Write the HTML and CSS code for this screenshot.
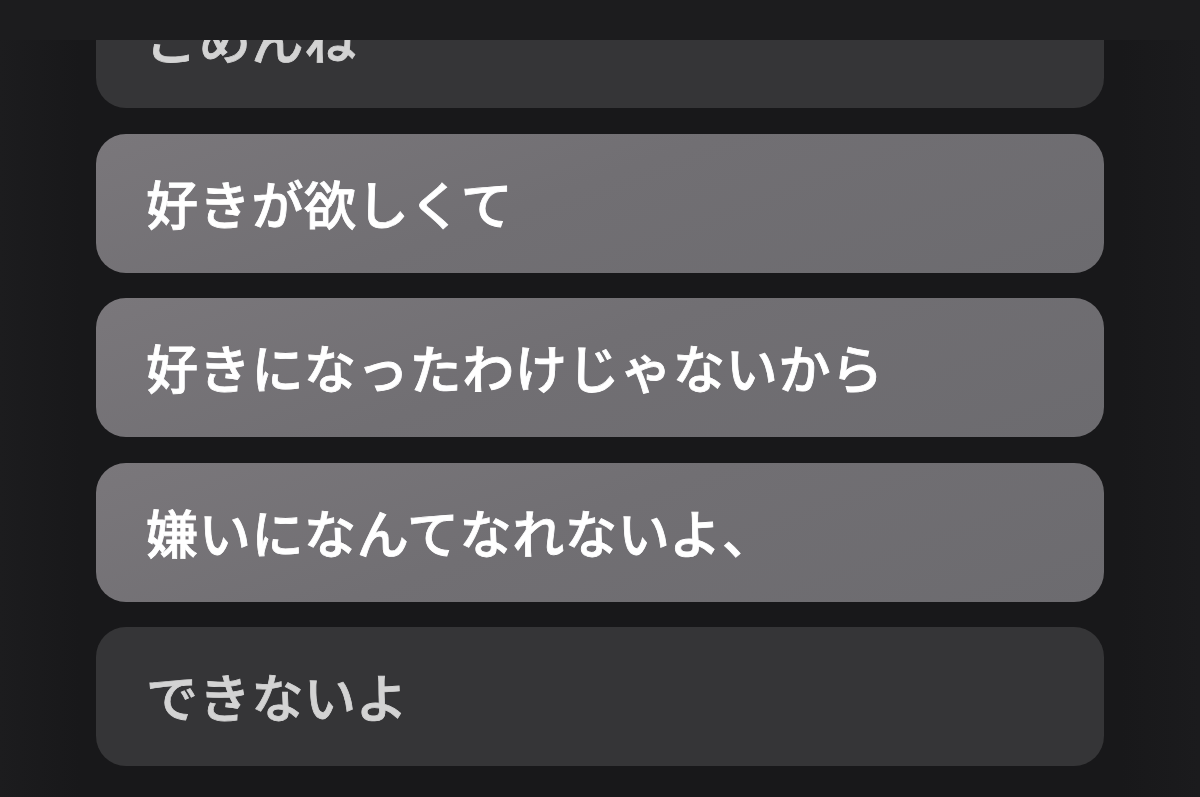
FILE: index.html
```html
<!DOCTYPE html>
<html lang="ja">
<head>
<meta charset="utf-8">
<link rel="stylesheet" href="styles.css">
</head>
<body>
<div class="screen">
  <div class="topbar"></div>
  <div class="scroll">
    <ul class="list">
      <li class="item dim first">ごめんね</li>
      <li class="item lit">好きが欲しくて</li>
      <li class="item lit">好きになったわけじゃないから</li>
      <li class="item lit">嫌いになんてなれないよ、</li>
      <li class="item dim">できないよ</li>
    </ul>
  </div>
</div>
</body>
</html>
```

FILE: styles.css
```css
html, body {
  margin: 0;
  padding: 0;
  background: #18181a;
}
.screen {
  width: 1200px;
  height: 797px;
  display: flex;
  flex-direction: column;
  overflow: hidden;
  background: linear-gradient(90deg, #1c1c1e 0px, #18181a 80px, #18181a 1120px, #1b1b1d 1200px);
  font-family: "Noto Sans CJK JP", "Noto Sans", sans-serif;
}
.topbar {
  height: 40px;
  flex: none;
  background: #1c1c1e;
  position: relative;
  z-index: 2;
}
.scroll {
  flex: 1;
  overflow: hidden;
}
.list {
  list-style: none;
  margin: 0;
  padding: 0 96px;
  display: flex;
  flex-direction: column;
  gap: 25.5px;
}
.item {
  height: 139px;
  box-sizing: border-box;
  border-radius: 30px;
  padding-left: 50px;
  padding-bottom: 2px;
  display: flex;
  align-items: center;
  font-size: 52px;
  font-weight: 500;
  -webkit-text-stroke: 0.8px currentColor;
  letter-spacing: 0.7px;
  white-space: nowrap;
}
.first {
  margin-top: -71px;
}
.dim {
  background: #353537;
  color: #d3d3d3;
}
.lit {
  background: linear-gradient(160deg, #7a777b 0%, #716f73 45%, #6c6b6f 100%);
  color: #ffffff;
}
```
